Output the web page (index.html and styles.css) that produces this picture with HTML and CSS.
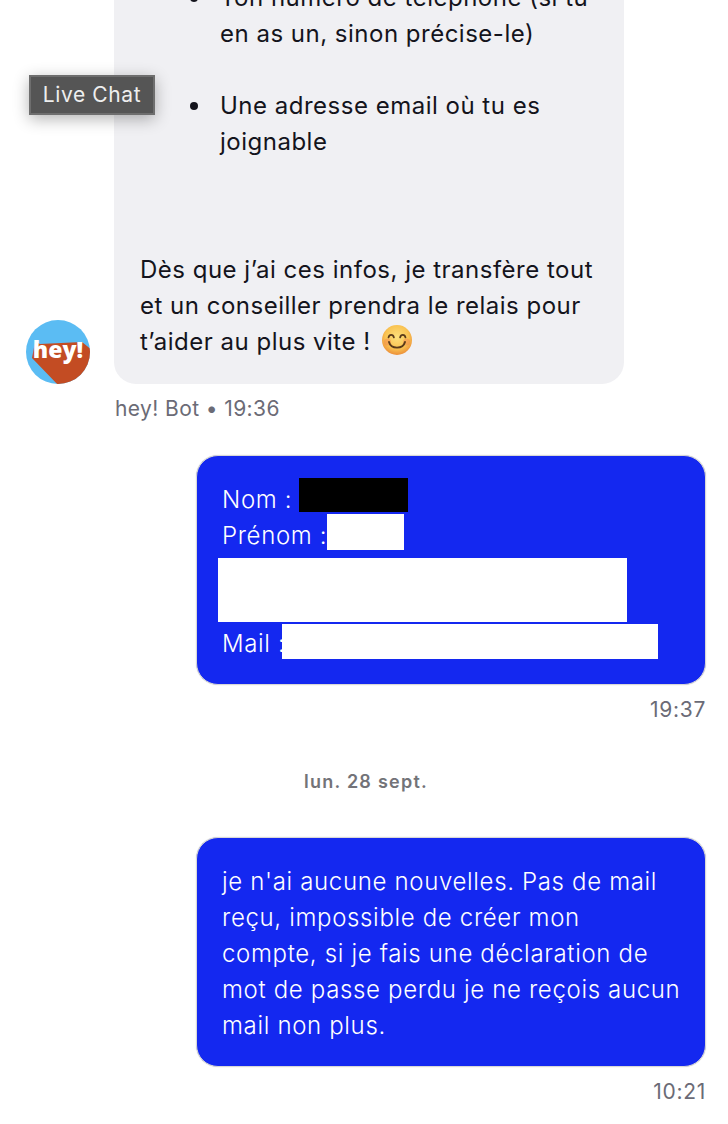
FILE: index.html
```html
<!DOCTYPE html>
<html lang="fr">
<head>
    <meta charset="UTF-8"/>
    <meta name="viewport" content="width=device-width,initial-scale=1"/>
    <title>Live Chat</title>
    <link rel="stylesheet" href="styles.css">
</head>
<body>
<div class="tooltip">Live Chat</div>

<main class="thread">
    <div class="bot-row">
        <svg class="avatar" viewBox="0 0 64 64" width="64" height="64">
            <defs>
                <clipPath id="disc"><circle cx="32" cy="32" r="32"/></clipPath>
            </defs>
            <circle cx="32" cy="32" r="32" fill="#5bbcf3"/>
            <polygon clip-path="url(#disc)" points="9,22 14,24 56,22 66,30 66,66 33,66 6,38" fill="#c34c23"/>
            <text class="avatar-text" x="32" y="38" text-anchor="middle">hey!</text>
        </svg>
        <div class="bubble bubble-bot">
            <ul class="info-list">
                <li>Ton numéro de téléphone (si tu en as un, sinon précise-le)</li>
                <li>Une adresse email où tu es joignable</li>
            </ul>
            <p class="bot-text">Dès que j’ai ces infos, je transfère tout et un conseiller prendra le relais pour t’aider au plus vite !
                <svg class="emoji" viewBox="0 0 30 30" width="30" height="30">
                    <defs>
                        <radialGradient id="face" cx="50%" cy="40%" r="60%">
                            <stop offset="0" stop-color="#fde07c"/>
                            <stop offset="0.65" stop-color="#f9c352"/>
                            <stop offset="1" stop-color="#ec8f38"/>
                        </radialGradient>
                    </defs>
                    <circle cx="15" cy="15" r="15" fill="url(#face)"/>
                    <circle cx="5.500" cy="17" r="3.500" fill="#f28a50" opacity=".5"/>
                    <circle cx="24.500" cy="17" r="3.500" fill="#f28a50" opacity=".5"/>
                    <path d="M6.500 12.500c.8-3.400 4.600-3.400 5.400 0M18.100 12.500c.8-3.400 4.600-3.400 5.400 0" fill="none" stroke="#5a3a1a" stroke-width="1.700" stroke-linecap="round"/>
                    <path d="M7 17c2 7.500 14 7.500 16 0" fill="none" stroke="#5a3a1a" stroke-width="1.900" stroke-linecap="round"/>
                </svg>
            </p>
        </div>
    </div>
    <div class="meta meta-bot">hey! Bot • 19:36</div>

    <div class="bubble bubble-user form-bubble">
        Nom :<br>
        Prénom :<br>
        <br>
        <br>
        Mail :
        <span class="redact redact-nom"></span>
        <span class="redact redact-prenom"></span>
        <span class="redact redact-tel"></span>
        <span class="redact redact-mail"></span>
    </div>
    <div class="meta meta-user">19:37</div>

    <div class="day">lun. 28 sept.</div>

    <div class="bubble bubble-user">je n'ai aucune nouvelles. Pas de mail reçu, impossible de créer mon<br>compte, si je fais une déclaration de mot de passe perdu je ne reçois aucun mail non plus.</div>
    <div class="meta meta-user">10:21</div>
</main>
</body>
</html>
```

FILE: styles.css
```css
html, body { margin: 0; height: 100%; overflow: hidden; background: #fff; }
body { font-family: Inter, "Liberation Sans", sans-serif; font-size: 24px; line-height: 36px; letter-spacing: .5px; color: #14141c; }

.thread { display: flex; flex-direction: column; margin-top: -46px; padding: 0 22px 0 26px; }

.bot-row { display: flex; align-items: flex-end; gap: 24px; }
.avatar { flex: none; display: block; }
.avatar-text { font-family: "Open Sans", sans-serif; font-weight: 800; font-size: 23px; letter-spacing: 0; fill: #fff; }

.bubble { box-sizing: border-box; width: 510px; padding: 26px 24px 24px 26px; border-radius: 22px; }
.bubble-bot { background: #f0f0f3; }
.bubble-user { position: relative; align-self: flex-end; padding: 26px 20px 22px 25px; background: #1428f0; color: #fff; border: 1px solid #d8d8d8; box-shadow: 0 0 1px #bbb; font-weight: 350; letter-spacing: .66px; }

.info-list { margin: 0 0 92px; padding-left: 50px; list-style: none; }
.info-list li { display: flex; gap: 22px; }
.info-list li::before { content: ""; flex: none; width: 8px; height: 8px; margin-top: 14px; border-radius: 50%; background: #14141c; }
.info-list li + li { margin-top: 36px; }
.bot-text { margin: 0; }
.emoji { vertical-align: -5px; margin-left: 4px; }

.meta { font-size: 21px; line-height: 26px; letter-spacing: .7px; color: #6b6b76; }
.meta-bot { margin: 12px 0 33px 89px; letter-spacing: .4px; }
.meta-user { align-self: flex-end; margin-top: 12px; }

.day { margin: 47px 0 43px; font-size: 18px; line-height: 24px; letter-spacing: 1.25px; font-weight: 600; color: #737378; text-align: center; }

/* caches posés par-dessus le texte */
.redact { position: absolute; background: #fff; }
.redact-nom { left: 102px; top: 22px; width: 109px; height: 34px; background: #000; }
.redact-prenom { left: 130px; top: 58px; width: 77px; height: 36px; }
.redact-tel { left: 21px; top: 102px; width: 409px; height: 64px; }
.redact-mail { left: 85px; top: 168px; width: 376px; height: 35px; }

.tooltip { position: absolute; left: 29px; top: 75px; box-sizing: border-box; width: 126px; height: 40px; border: 2px solid #6e6e6e; background: #555; color: #eee; font-size: 21px; line-height: 36px; letter-spacing: .6px; text-align: center; box-shadow: 0 4px 16px rgba(0, 0, 0, .3); }
```
